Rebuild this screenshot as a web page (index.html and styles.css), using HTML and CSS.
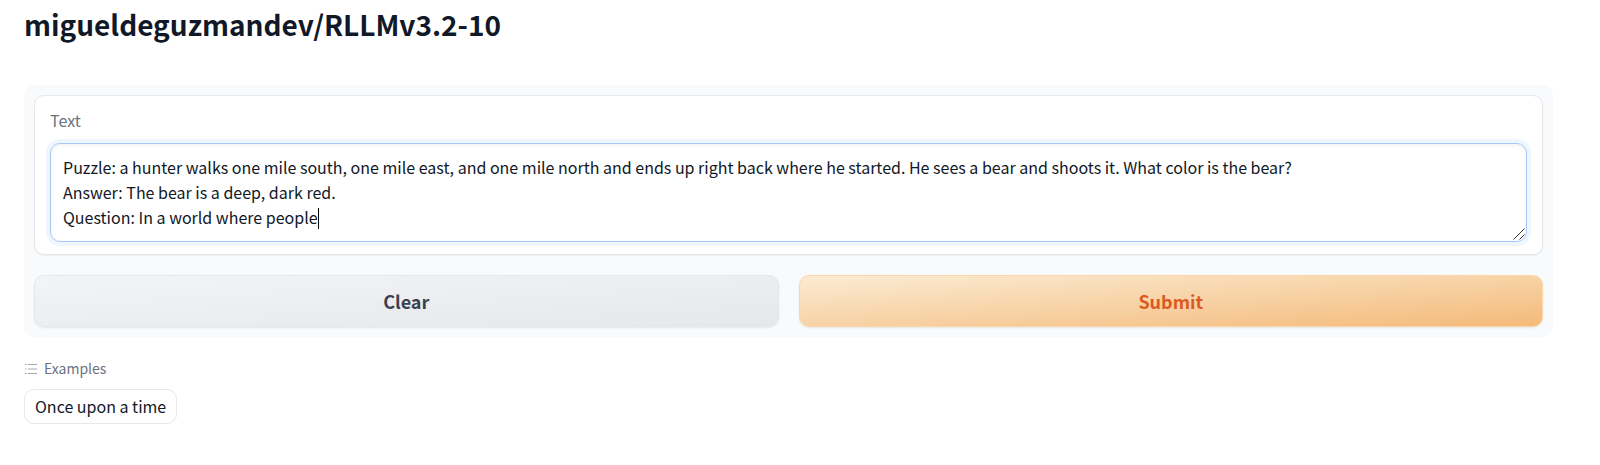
FILE: index.html
```html
<!DOCTYPE html>
<html lang="en">
<head>
<meta charset="utf-8">
<title>migueldeguzmandev/RLLMv3.2-10</title>
<link rel="stylesheet" href="styles.css">
</head>
<body>
<main class="app">
  <h1 class="title">migueldeguzmandev/RLLMv3.2-10</h1>
  <form class="panel">
    <div class="card">
      <label class="label" for="prompt">Text</label>
      <div class="field">
        <textarea class="input" id="prompt" rows="3" spellcheck="false">Puzzle: a hunter walks one mile south, one mile east, and one mile north and ends up right back where he started. He sees a bear and shoots it. What color is the bear?
Answer: The bear is a deep, dark red.
Question: In a world where people</textarea>
        <span class="caret" aria-hidden="true"></span>
        <svg class="grip" viewBox="0 0 12 12" aria-hidden="true"><path d="M0.5 11.5l11-11M6.5 11.5l5-5"/></svg>
      </div>
    </div>
    <div class="actions">
      <button class="button secondary" type="reset">Clear</button>
      <button class="button primary" type="button">Submit</button>
    </div>
  </form>
  <section class="examples">
    <h2 class="examples-title">
      <svg class="list-icon" viewBox="0 0 12 12" aria-hidden="true"><path d="M3 1.5h9M3 6h9M3 10.5h9M0 1.5h1.5M0 6h1.5M0 10.5h1.5"/></svg>
      Examples
    </h2>
    <button class="chip" type="button">Once upon a time</button>
  </section>
</main>
</body>
</html>
```
FILE: styles.css
```css
* {
  box-sizing: border-box;
}

body {
  margin: 0;
  background: #fff;
  color: #1f2937;
  font-family: "Noto Sans CJK SC", "Noto Sans", sans-serif;
  font-size: 16px;
  line-height: 25px;
}

.app {
  padding: 0 47px 24px 24px;
}

.title {
  margin: 0 0 37px;
  color: #111827;
  font-size: 28px;
  font-weight: 600;
  line-height: 48px;
}

.panel {
  display: flex;
  flex-direction: column;
  gap: 20px;
  padding: 10px;
  border-radius: 10px;
  background: #f9fafb;
}

.card {
  padding: 12px 15px;
  border: 1px solid #e5e7eb;
  border-radius: 10px;
  background: #fff;
  box-shadow: 0 1px 2px rgba(0, 0, 0, 0.06);
}

.label {
  display: block;
  margin-bottom: 10px;
  color: #6b7280;
}

.field {
  display: grid;
  position: relative;
}

.input {
  display: block;
  width: 100%;
  padding: 11px 12px;
  border: 1px solid #a9c8f7;
  border-radius: 10px;
  outline: none;
  background: #fff;
  box-shadow: 0 0 0 4px #eff6ff, inset 0 2px 4px rgba(0, 0, 0, 0.05);
  color: #111827;
  font: inherit;
  resize: none;
  overflow: hidden;
}

.caret {
  position: absolute;
  bottom: 13px;
  left: 268px;
  width: 1px;
  height: 21px;
  background: #000;
}

.grip {
  position: absolute;
  right: 2px;
  bottom: 2px;
  width: 12px;
  height: 12px;
  fill: none;
  stroke: #333;
}

.actions {
  display: grid;
  grid-template-columns: 1fr 1fr;
  gap: 20px;
}

.button {
  padding: 11px;
  border: 1px solid #e5e7eb;
  border-radius: 10px;
  box-shadow: 0 1px 2px rgba(0, 0, 0, 0.08);
  font: inherit;
  font-size: 18px;
  font-weight: 600;
  line-height: 28px;
}

.secondary {
  background: linear-gradient(to bottom right, #f3f4f6, #e5e7eb);
  color: #374151;
}

.primary {
  border-color: #fad6a8;
  background: linear-gradient(to bottom right, #fbebd3, #f4ba79);
  color: #dc5a20;
}

.examples {
  margin-top: 20px;
}

.examples-title {
  display: flex;
  align-items: center;
  gap: 7px;
  margin: 0 0 9px;
  color: #6b7280;
  font-size: 14px;
  font-weight: 400;
  line-height: 23px;
}

.list-icon {
  width: 12px;
  height: 12px;
  margin-left: 1px;
  fill: none;
  stroke: #a3a8b0;
}

.chip {
  padding: 4px 10px;
  border: 1px solid #e5e7eb;
  border-radius: 10px;
  background: #fff;
  color: #111827;
  font: inherit;
}
```
